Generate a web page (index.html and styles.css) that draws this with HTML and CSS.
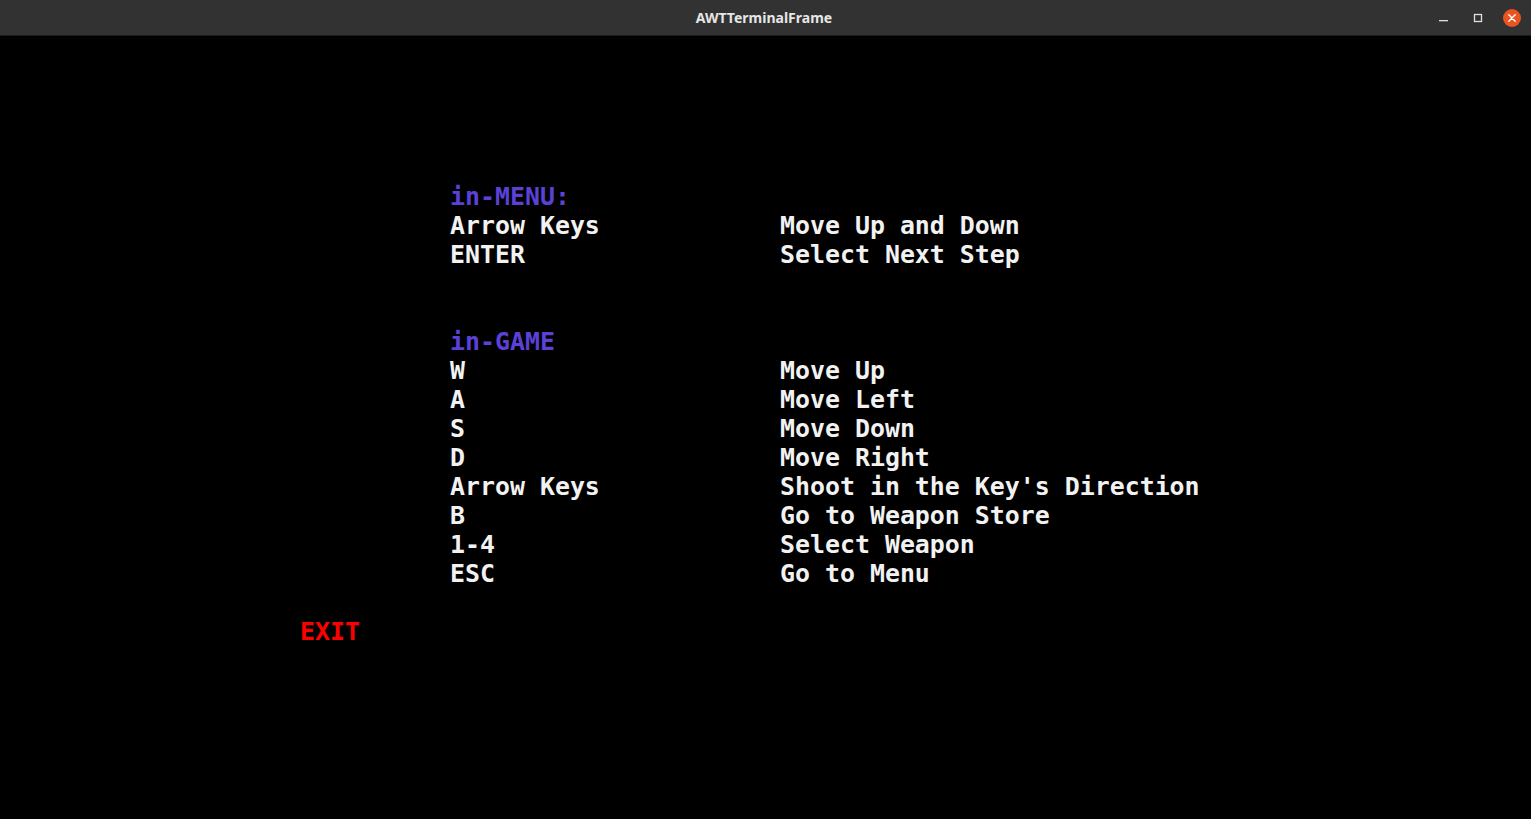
FILE: index.html
```html
<!DOCTYPE html>
<html>
<head>
<meta charset="utf-8">
<title>AWTTerminalFrame</title>
<link rel="stylesheet" href="styles.css">
</head>
<body>
<div class="window">
  <header class="titlebar">
    <div class="title">AWTTerminalFrame</div>
    <div class="controls">
      <span class="ctl min"><svg width="12" height="12" viewBox="0 0 12 12"><rect x="1" y="8" width="9" height="1.3" fill="#e0e0e0"/></svg></span>
      <span class="ctl max"><svg width="12" height="12" viewBox="0 0 12 12"><rect x="2.5" y="2.5" width="7" height="7" fill="none" stroke="#e0e0e0" stroke-width="1.3"/></svg></span>
      <span class="ctl close"><svg width="18" height="18" viewBox="0 0 18 18"><circle cx="9" cy="9" r="9" fill="#e95420"/><path d="M5.8 5.8 L12.2 12.2 M12.2 5.8 L5.8 12.2" stroke="#fff" stroke-width="1.4" stroke-linecap="round"/></svg></span>
    </div>
  </header>
  <main class="terminal">
    <section class="block">
      <div class="heading">in-MENU:</div>
      <div class="row"><span class="key">Arrow Keys</span><span class="desc">Move Up and Down</span></div>
      <div class="row"><span class="key">ENTER</span><span class="desc">Select Next Step</span></div>
      <div class="row blank"></div>
      <div class="row blank"></div>
      <div class="heading">in-GAME</div>
      <div class="row"><span class="key">W</span><span class="desc">Move Up</span></div>
      <div class="row"><span class="key">A</span><span class="desc">Move Left</span></div>
      <div class="row"><span class="key">S</span><span class="desc">Move Down</span></div>
      <div class="row"><span class="key">D</span><span class="desc">Move Right</span></div>
      <div class="row"><span class="key">Arrow Keys</span><span class="desc">Shoot in the Key's Direction</span></div>
      <div class="row"><span class="key">B</span><span class="desc">Go to Weapon Store</span></div>
      <div class="row"><span class="key">1-4</span><span class="desc">Select Weapon</span></div>
      <div class="row"><span class="key">ESC</span><span class="desc">Go to Menu</span></div>
    </section>
    <div class="row blank"></div>
    <div class="exit">EXIT</div>
  </main>
</div>
</body>
</html>
```

FILE: styles.css
```css
html, body {
  margin: 0;
  padding: 0;
  background: #000;
  height: 100%;
  overflow: hidden;
}
.window {
  display: flex;
  flex-direction: column;
  height: 819px;
}
.titlebar {
  height: 36px;
  flex: 0 0 36px;
  background: #323232;
  border-bottom: 1px solid #1d1d1d;
  box-sizing: border-box;
  display: flex;
  align-items: center;
  justify-content: center;
  position: relative;
}
.title {
  font-family: "Noto Sans", "DejaVu Sans", sans-serif;
  font-weight: bold;
  font-size: 14px;
  color: #e6e6e6;
  margin-left: -3px;
}
.controls {
  position: absolute;
  right: 10px;
  top: 0;
  height: 35px;
  display: flex;
  align-items: center;
}
.ctl {
  display: flex;
  align-items: center;
  justify-content: center;
}
.ctl.min { width: 12px; margin-right: 22px; }
.ctl.max { width: 12px; margin-right: 19px; }
.ctl.close { width: 18px; }
.terminal {
  flex: 1;
  background: #000;
  padding-top: 146px;
  font-family: "DejaVu Sans Mono", "Liberation Mono", monospace;
  font-weight: bold;
  font-size: 24.9px;
  line-height: 29px;
  color: #f2f2f2;
}
.key, .desc, .heading, .exit {
  white-space: pre;
}
.block {
  margin-left: 450px;
}
.heading {
  color: #5b41d6;
  height: 29px;
}
.row {
  display: flex;
  height: 29px;
}
.key {
  width: 330px;
}
.exit {
  margin-left: 300px;
  color: #ff0000;
  height: 29px;
}
```
